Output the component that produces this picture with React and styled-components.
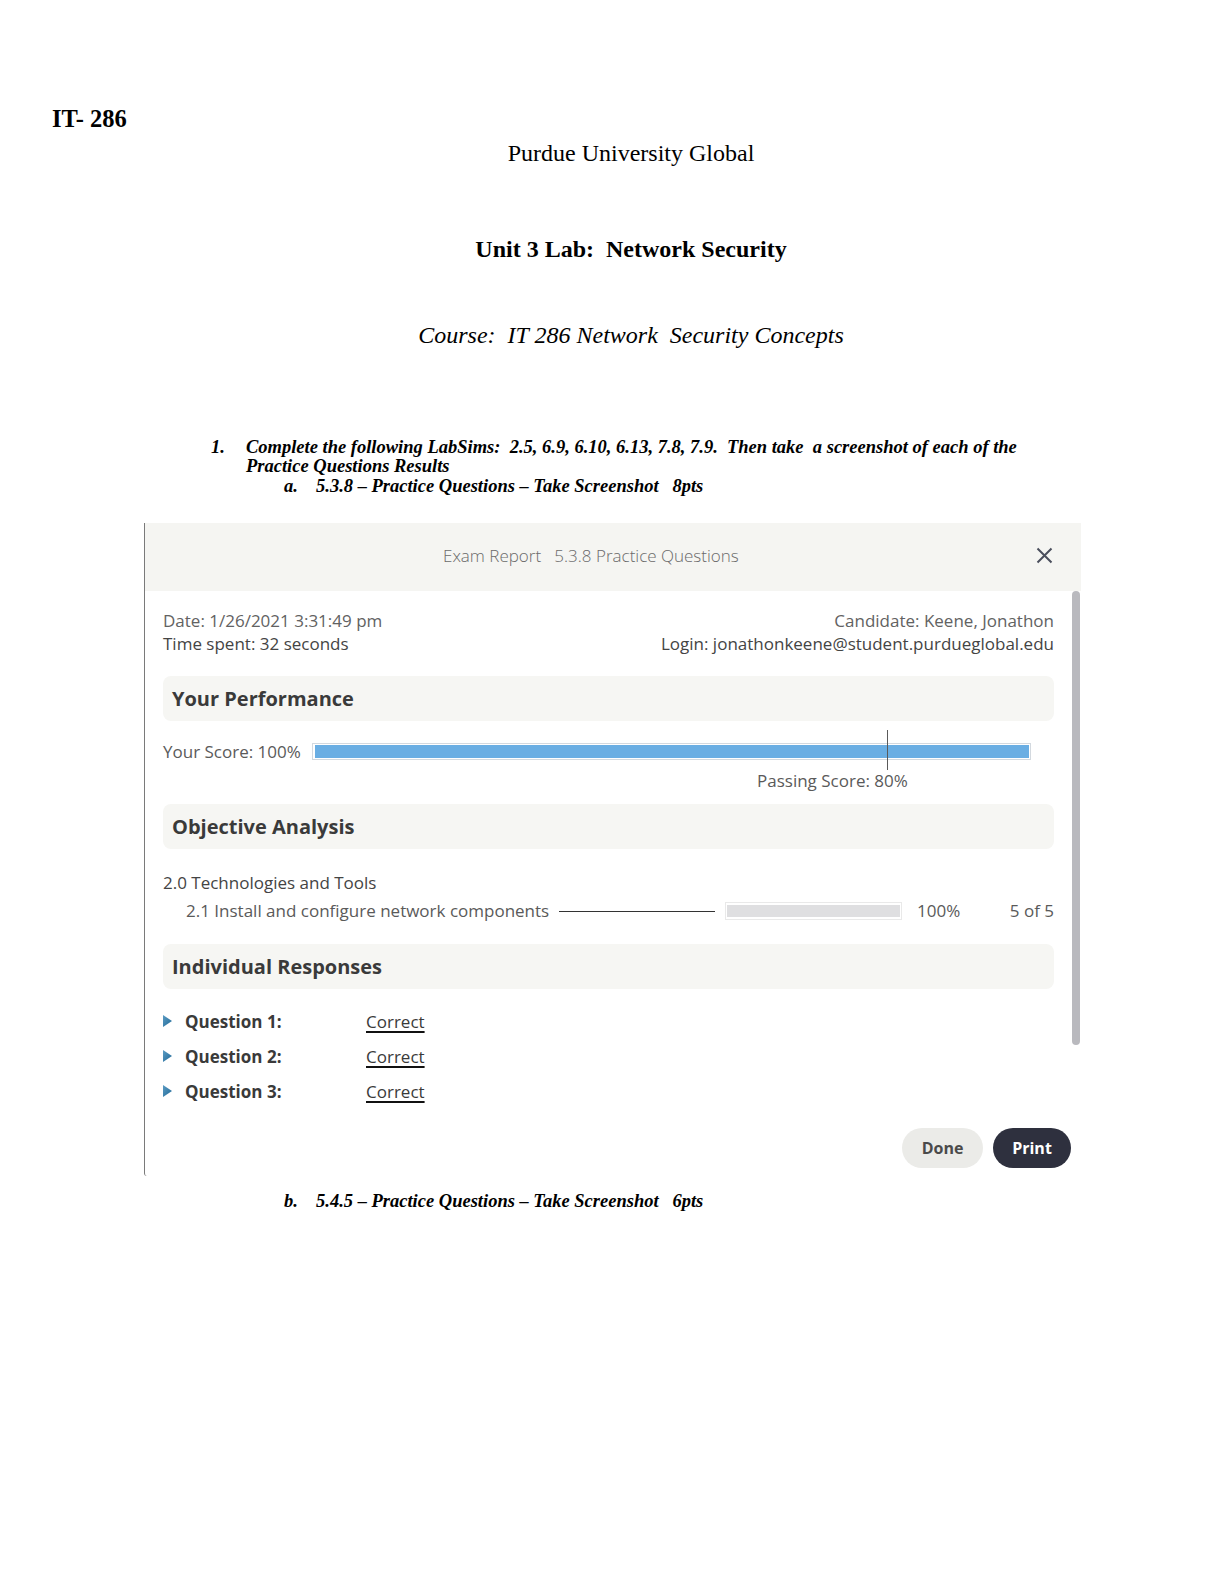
import React from "react";
import styled, { createGlobalStyle } from "styled-components";

// ===== Global =====
const GlobalStyle = createGlobalStyle`
  html, body {
    margin: 0;
    padding: 0;
    background: #fff;
  }
  * { box-sizing: border-box; }
`;

// ===== Document page =====
const Page = styled.div`
  width: 1224px;
  min-height: 1584px;
  padding: 106px 14px 0 52px;
  font-family: "Liberation Serif", "Times New Roman", serif;
  color: #000;
`;

const CourseCode = styled.div`
  font-size: 24.5px;
  font-weight: 700;
  line-height: 26px;
`;

const CenterLine = styled.div`
  margin-top: ${({ $gap }) => $gap}px;
  text-align: center;
  font-size: 24px;
  line-height: 28px;
  white-space: pre;
  font-weight: ${({ $bold }) => ($bold ? 700 : 400)};
  font-style: ${({ $italic }) => ($italic ? "italic" : "normal")};
`;

const Task = styled.div`
  display: flex;
  margin: 89px 0 0 159px;
  font-size: 18.5px;
  line-height: 19.7px;
  font-weight: 700;
  font-style: italic;
  white-space: pre;
`;

const TaskNum = styled.span`
  flex: none;
  width: 35px;
`;

const SubTask = styled.div`
  display: flex;
  margin: ${({ $gap }) => $gap || 0}px 0 0 232px;
  font-size: 18.5px;
  line-height: 19.7px;
  font-weight: 700;
  font-style: italic;
  white-space: pre;
`;

const SubLetter = styled.span`
  flex: none;
  width: 32px;
`;

// ===== Exam report screenshot =====
const Report = styled.section`
  display: flex;
  flex-direction: column;
  width: 937px;
  margin: 26.5px 0 0 92px;
  border-left: 1px solid #7a7a7a;
  border-bottom-left-radius: 3px;
  font-family: "Open Sans", "DejaVu Sans", sans-serif;
  color: #3d3d3d;
`;

const ReportHeader = styled.header`
  display: flex;
  align-items: center;
  height: 68px;
  padding: 0 28px 0 298px;
  background: #f5f5f2;
`;

const ReportTitle = styled.div`
  margin-bottom: 3px;
  font-size: 17px;
  font-weight: 300;
  color: #6a6a6a;
  white-space: pre;
`;

const CloseButton = styled.button`
  display: flex;
  margin: -3px 0 0 auto;
  padding: 0;
  border: 0;
  background: none;
  color: #4a4e5c;
`;

const ReportBody = styled.div`
  display: flex;
`;

const ReportContent = styled.div`
  flex: 1;
  padding: 17.5px 0 0 18px;
`;

const ScrollTrack = styled.div`
  flex: none;
  width: 8px;
  margin: 0 1px 0 18px;
`;

const ScrollThumb = styled.div`
  height: 454px;
  border-radius: 4px;
  background: #b9b9be;
`;

const InfoRow = styled.div`
  display: flex;
  justify-content: space-between;
  font-size: 17px;
  line-height: 23.5px;
`;

const InfoCol = styled.div`
  text-align: ${({ $right }) => ($right ? "right" : "left")};
`;

const InfoLine = styled.div`
  color: ${({ $light }) => ($light ? "#626262" : "#444")};
`;

const SectionHeading = styled.h2`
  margin: ${({ $gap }) => $gap}px 0 0;
  height: 45px;
  padding-left: 9px;
  border-radius: 8px;
  background: #f6f6f3;
  font-size: 20px;
  font-weight: 700;
  line-height: 45px;
  color: #3a3a3a;
`;

const ScoreRow = styled.div`
  display: flex;
  align-items: center;
  height: 24px;
  margin-top: 18.5px;
  padding-right: 23px;
  font-size: 17px;
  color: #5a5a5a;
`;

const ScoreTrack = styled.div`
  position: relative;
  flex: 1;
  height: 17px;
  margin-left: 11px;
  padding: 1px 1px 1px 2px;
  border: 1px solid #d3d9df;
`;

const ScoreFill = styled.div`
  height: 13px;
  background: #6aaee3;
`;

const PassMarker = styled.div`
  position: absolute;
  top: -14px;
  width: 1px;
  height: 40px;
  background: #5a5a5a;
`;

const Legend = styled.div`
  margin-top: 5.5px;
  padding-left: 594px;
  font-size: 17px;
  line-height: 23.5px;
  color: #5a5a5a;
`;

const ObjGroup = styled.div`
  margin-top: 21.5px;
  font-size: 17px;
  line-height: 23.5px;
  color: #444;
`;

const ObjRow = styled.div`
  display: flex;
  align-items: center;
  height: 34px;
  padding-left: 23px;
  color: #5a5a5a;
`;

const Leader = styled.div`
  flex: 1;
  height: 1px;
  margin: 0 10px;
  background: #333;
`;

const ObjTrack = styled.div`
  flex: none;
  width: 177px;
  height: 18px;
  padding: 2px 1px;
  border: 1px solid #e9e9e9;
`;

const ObjFill = styled.div`
  height: 12px;
  background: #dfdfe1;
`;

const ObjPercent = styled.div`
  flex: none;
  width: 92px;
  margin-left: 15px;
`;

const ObjCount = styled.div`
  flex: none;
  width: 45px;
  text-align: right;
`;

const QuestionList = styled.div`
  margin-top: 14.5px;
`;

const QuestionRow = styled.div`
  display: flex;
  align-items: center;
  height: 35px;
  font-size: 17px;
`;

const QuestionLabel = styled.span`
  width: 181px;
  margin-left: 13px;
  font-weight: 700;
  color: #3a3a3a;
`;

const ResultLink = styled.a`
  color: #3a3a3a;
  text-decoration: underline;
  text-decoration-color: #111;
  text-decoration-thickness: 2px;
  text-underline-offset: 3px;
`;

const ReportFooter = styled.footer`
  display: flex;
  justify-content: flex-end;
  gap: 10px;
  padding: 19.5px 10px 8px;
`;

const PillButton = styled.button`
  width: ${({ $w }) => $w}px;
  height: 40px;
  border: 0;
  border-radius: 20px;
  font-family: inherit;
  font-size: 16px;
  font-weight: 700;
  background: ${({ $dark }) => ($dark ? "#2e303e" : "#ebebe8")};
  color: ${({ $dark }) => ($dark ? "#fff" : "#4a4a4a")};
`;

const CloseIcon = () => (
  <svg width="17" height="17" viewBox="0 0 17 17" fill="none">
    <path d="M1.5 1.5 L15.5 15.5 M15.5 1.5 L1.5 15.5" stroke="currentColor" strokeWidth="2" />
  </svg>
);

const Caret = () => (
  <svg width="9" height="12" viewBox="0 0 9 12">
    <defs>
      <linearGradient id="caretFill" x1="0" y1="0" x2="1" y2="1">
        <stop offset="0" stopColor="#5c9cc4" />
        <stop offset="1" stopColor="#1f6896" />
      </linearGradient>
    </defs>
    <polygon points="0,0 9,6 0,12" fill="url(#caretFill)" />
  </svg>
);

const questions = [1, 2, 3];

export default function App() {
  const passing = 80;

  return (
    <Page>
      <GlobalStyle />
      <CourseCode>IT- 286</CourseCode>
      <CenterLine $gap={7}>Purdue University Global</CenterLine>
      <CenterLine $gap={67.5} $bold>
        Unit 3 Lab:  Network Security
      </CenterLine>
      <CenterLine $gap={58} $italic>
        Course:  IT 286 Network  Security Concepts
      </CenterLine>

      <Task>
        <TaskNum>1.</TaskNum>
        <span>
          Complete the following LabSims:  2.5, 6.9, 6.10, 6.13, 7.8, 7.9.  Then take  a screenshot of each of the
          <br />
          Practice Questions Results
        </span>
      </Task>
      <SubTask>
        <SubLetter>a.</SubLetter>
        <span>5.3.8 – Practice Questions – Take Screenshot   8pts</span>
      </SubTask>

      <Report>
        <ReportHeader>
          <ReportTitle>Exam Report   5.3.8 Practice Questions</ReportTitle>
          <CloseButton aria-label="Close">
            <CloseIcon />
          </CloseButton>
        </ReportHeader>

        <ReportBody>
          <ReportContent>
            <InfoRow>
              <InfoCol>
                <InfoLine $light>Date: 1/26/2021 3:31:49 pm</InfoLine>
                <InfoLine>Time spent: 32 seconds</InfoLine>
              </InfoCol>
              <InfoCol $right>
                <InfoLine $light>Candidate: Keene, Jonathon</InfoLine>
                <InfoLine>Login: jonathonkeene@student.purdueglobal.edu</InfoLine>
              </InfoCol>
            </InfoRow>

            <SectionHeading $gap={20.5}>Your Performance</SectionHeading>
            <ScoreRow>
              <span>Your Score: 100%</span>
              <ScoreTrack>
                <ScoreFill style={{ width: "100%" }} />
                <PassMarker style={{ left: `${passing}%` }} />
              </ScoreTrack>
            </ScoreRow>
            <Legend>Passing Score: {passing}%</Legend>

            <SectionHeading $gap={11.5}>Objective Analysis</SectionHeading>
            <ObjGroup>
              <div>2.0 Technologies and Tools</div>
              <ObjRow>
                <span>2.1 Install and configure network components</span>
                <Leader />
                <ObjTrack>
                  <ObjFill style={{ width: "100%" }} />
                </ObjTrack>
                <ObjPercent>100%</ObjPercent>
                <ObjCount>5 of 5</ObjCount>
              </ObjRow>
            </ObjGroup>

            <SectionHeading $gap={16}>Individual Responses</SectionHeading>
            <QuestionList>
              {questions.map((n) => (
                <QuestionRow key={n}>
                  <Caret />
                  <QuestionLabel>Question {n}:</QuestionLabel>
                  <ResultLink href="#">Correct</ResultLink>
                </QuestionRow>
              ))}
            </QuestionList>
          </ReportContent>
          <ScrollTrack>
            <ScrollThumb />
          </ScrollTrack>
        </ReportBody>

        <ReportFooter>
          <PillButton $w={81}>Done</PillButton>
          <PillButton $w={78} $dark>
            Print
          </PillButton>
        </ReportFooter>
      </Report>

      <SubTask $gap={15.5}>
        <SubLetter>b.</SubLetter>
        <span>5.4.5 – Practice Questions – Take Screenshot   6pts</span>
      </SubTask>
    </Page>
  );
}
